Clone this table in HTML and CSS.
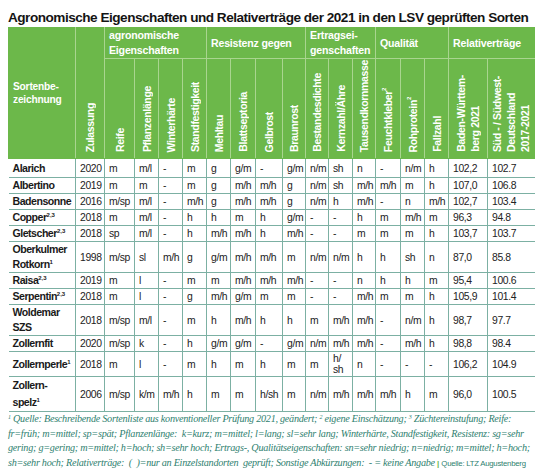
FILE: index.html
```html
<!DOCTYPE html>
<html lang="de">
<head>
<meta charset="utf-8">
<title>Agronomische Eigenschaften und Relativerträge</title>
<link rel="stylesheet" href="styles.css">
</head>
<body>
<div class="page">
  <h1 class="title">Agronomische Eigenschaften und Relativerträge der 2021 in den LSV geprüften Sorten</h1>
  <table class="lsv">
    <colgroup>
      <col class="w-name"><col class="w-zul"><col class="w-reife"><col class="w-24"><col class="w-24"><col class="w-24"><col class="w-24"><col class="w-25"><col class="w-27"><col class="w-23"><col class="w-23"><col class="w-24"><col class="w-23"><col class="w-25"><col class="w-24"><col class="w-24"><col class="w-bw"><col class="w-sued">
    </colgroup>
    <thead>
      <tr class="h1">
        <th rowspan="2" class="sort">Sortenbe-<br>zeichnung</th>
        <th rowspan="2" class="rot"><span>Zulassung</span></th>
        <th colspan="4" class="grp">agronomische<br>Eigenschaften</th>
        <th colspan="4" class="grp">Resistenz gegen</th>
        <th colspan="3" class="grp">Ertragsei-<br>genschaften</th>
        <th colspan="3" class="grp">Qualität</th>
        <th colspan="2" class="grp last">Relativerträge</th>
      </tr>
      <tr class="h2">
        <th class="rot"><span>Reife</span></th>
        <th class="rot"><span>Pflanzenlänge</span></th>
        <th class="rot"><span>Winterhärte</span></th>
        <th class="rot"><span>Standfestigkeit</span></th>
        <th class="rot"><span>Mehltau</span></th>
        <th class="rot"><span>Blattseptoria</span></th>
        <th class="rot"><span>Gelbrost</span></th>
        <th class="rot"><span>Braunrost</span></th>
        <th class="rot"><span>Bestandesdichte</span></th>
        <th class="rot"><span>Kernzahl/Ähre</span></th>
        <th class="rot"><span>Tausendkornmasse</span></th>
        <th class="rot"><span>Feuchtkleber<sup>2</sup></span></th>
        <th class="rot"><span>Rohprotein<sup>2</sup></span></th>
        <th class="rot"><span>Fallzahl</span></th>
        <th class="rot multi"><span>Baden-Württem-<br>berg 2021</span></th>
        <th class="rot multi last"><span>Süd - / Südwest-<br>Deutschland<br>2017-2021</span></th>
      </tr>
    </thead>
    <tbody>
      <tr class="r-first"><td class="name">Alarich</td><td>2020</td><td>m</td><td>m/l</td><td>-</td><td>m</td><td>g</td><td>g/m</td><td>-</td><td>g/m</td><td>n/m</td><td>sh</td><td>n</td><td>-</td><td>n/m</td><td>h</td><td>102,2</td><td>102.7</td></tr>
      <tr><td class="name">Albertino</td><td>2019</td><td>m</td><td>m</td><td>-</td><td>m</td><td>g</td><td>m/h</td><td>m/h</td><td>g</td><td>n/m</td><td>sh</td><td>m/h</td><td>m/h</td><td>m</td><td>h</td><td>107,0</td><td>106.8</td></tr>
      <tr><td class="name">Badensonne</td><td>2016</td><td>m/sp</td><td>m/l</td><td>-</td><td>m/h</td><td>g</td><td>m/h</td><td>m/h</td><td>g</td><td>n/m</td><td>h</td><td>m/h</td><td>-</td><td>n</td><td>m/h</td><td>102,7</td><td>103.4</td></tr>
      <tr><td class="name">Copper<sup>2,3</sup></td><td>2018</td><td>m</td><td>m/l</td><td>-</td><td>h</td><td>h</td><td>m</td><td>h</td><td>g/m</td><td>-</td><td>-</td><td>h</td><td>m</td><td>m/h</td><td>m</td><td>96,3</td><td>94.8</td></tr>
      <tr><td class="name">Gletscher<sup>2,3</sup></td><td>2018</td><td>sp</td><td>m/l</td><td>-</td><td>h</td><td>m/h</td><td>m/h</td><td>h</td><td>m/h</td><td>-</td><td>-</td><td>m</td><td>m</td><td>m</td><td>h</td><td>103,7</td><td>103.7</td></tr>
      <tr class="r-two"><td class="name">Oberkulmer<br>Rotkorn<sup>1</sup></td><td>1998</td><td>m/sp</td><td>sl</td><td>m/h</td><td>g</td><td>g/m</td><td>m/h</td><td>m/h</td><td>m</td><td>n/m</td><td>n/m</td><td>h</td><td>h</td><td>sh</td><td>n</td><td>87,0</td><td>85.8</td></tr>
      <tr><td class="name">Raisa<sup>2,3</sup></td><td>2019</td><td>m</td><td>l</td><td>-</td><td>m</td><td>m</td><td>m/h</td><td>m/h</td><td>m/h</td><td>-</td><td>-</td><td>n</td><td>h</td><td>h</td><td>m</td><td>95,4</td><td>100.6</td></tr>
      <tr><td class="name">Serpentin<sup>2,3</sup></td><td>2018</td><td>m</td><td>l</td><td>-</td><td>g</td><td>m/h</td><td>g/m</td><td>m</td><td>m</td><td>-</td><td>-</td><td>m/h</td><td>m</td><td>m</td><td>h</td><td>105,9</td><td>101.4</td></tr>
      <tr class="r-two"><td class="name">Woldemar<br>SZS</td><td>2018</td><td>m/sp</td><td>m/l</td><td>-</td><td>m</td><td>h</td><td>m/h</td><td>h</td><td>h</td><td>m</td><td>m/h</td><td>m/h</td><td>-</td><td>n/m</td><td>h</td><td>98,7</td><td>97.7</td></tr>
      <tr><td class="name">Zollernfit</td><td>2020</td><td>m/sp</td><td>k</td><td>-</td><td>h</td><td>g/m</td><td>g/m</td><td>-</td><td>g/m</td><td>n/m</td><td>m/h</td><td>m/h</td><td>-</td><td>m/h</td><td>h</td><td>98,8</td><td>98.4</td></tr>
      <tr class="r-perle"><td class="name">Zollernperle<sup>1</sup></td><td>2018</td><td>m</td><td>l</td><td>-</td><td>m</td><td>h</td><td>m</td><td>h</td><td>m</td><td>m</td><td class="wrap">h/<br>sh</td><td>n</td><td>-</td><td>-</td><td>-</td><td>106,2</td><td>104.9</td></tr>
      <tr class="r-spelz"><td class="name">Zollern-<br>spelz<sup>1</sup></td><td>2006</td><td>m/sp</td><td>k/m</td><td>m/h</td><td>h</td><td>m</td><td>m</td><td>h/sh</td><td>m</td><td>n/m</td><td>m/h</td><td>m/h</td><td>m/h</td><td>h</td><td>m</td><td>96,0</td><td>100.5</td></tr>
    </tbody>
  </table>
  <p class="notes"><sup>1</sup> Quelle: Beschreibende Sortenliste aus konventioneller Prüfung 2021, geändert; <sup>2</sup> eigene Einschätzung; <sup>3</sup> Züchtereinstufung; Reife:<br>fr=früh; m=mittel; sp=spät; Pflanzenlänge:&nbsp; k=kurz; m=mittel; l=lang; sl=sehr lang; Winterhärte, Standfestigkeit, Resistenz: sg=sehr<br>gering; g=gering; m=mittel; h=hoch; sh=sehr hoch; Ertrags-, Qualitätseigenschaften: sn=sehr niedrig; n=niedrig; m=mittel; h=hoch;<br>sh=sehr hoch; Relativerträge:&nbsp; (&nbsp; )=nur an Einzelstandorten&nbsp; geprüft; Sonstige Abkürzungen:&nbsp; - = keine Angabe <span class="sep">|</span> <span class="src">Quelle: LTZ Augustenberg</span></p>
</div>
</body>
</html>
```
FILE: styles.css
```css
html, body {
  margin: 0;
  padding: 0;
  background: #ffffff;
}

body {
  font-family: "Liberation Sans", Arial, sans-serif;
  color: #1d1d1d;
}

.page {
  padding: 9px 0 0 8px;
}

.title {
  margin: 0;
  font-size: 13.6px;
  line-height: 18px;
  font-weight: bold;
  letter-spacing: -0.5px;
  color: #141414;
  white-space: nowrap;
}

.lsv {
  border-collapse: collapse;
  table-layout: fixed;
  width: 526px;
}

.w-name { width: 67px; }
.w-zul { width: 29px; }
.w-reife { width: 30px; }
.w-23 { width: 23px; }
.w-24 { width: 24px; }
.w-25 { width: 25px; }
.w-27 { width: 27px; }
.w-bw { width: 39px; }
.w-sued { width: 47px; }

.lsv th {
  background: #6cb84a;
  color: #ffffff;
  font-weight: bold;
  border: 1px solid #a9d58f;
  padding: 0;
  text-align: left;
  letter-spacing: -0.2px;
}

.lsv thead tr:first-child th {
  border-top-color: #6cb84a;
}

.lsv th:first-child {
  border-left-color: #6cb84a;
}

.lsv th.last {
  border-right-color: #6cb84a;
}

.lsv .h2 th,
.lsv th.sort,
.lsv .h1 th.rot {
  border-bottom-color: #6cb84a;
}

.h1 {
  height: 30px;
}

.h2 {
  height: 100px;
}

.grp {
  font-size: 10.6px;
  line-height: 15px;
  padding-left: 4px !important;
  vertical-align: middle;
}

.sort {
  font-size: 10.2px;
  line-height: 13px;
  padding-left: 4px !important;
  vertical-align: middle;
}

.rot {
  vertical-align: bottom;
  text-align: center !important;
  font-size: 10.5px;
  line-height: 14px;
  letter-spacing: -0.35px !important;
  padding-bottom: 3px !important;
}

.rot span {
  display: inline-block;
  writing-mode: vertical-rl;
  transform: rotate(180deg);
  white-space: nowrap;
  text-align: left;
}

.rot sup {
  font-size: 6px;
  line-height: 0;
  vertical-align: super;
}

.lsv td {
  border: 1px solid #7cb0a3;
  padding: 0 0 0 4px;
  font-size: 10.4px;
  letter-spacing: -0.4px;
  line-height: 15px;
  height: 15px;
  vertical-align: middle;
  white-space: nowrap;
  overflow: hidden;
  color: #222222;
}

.lsv td:first-child {
  border-left: none;
}

.lsv td:last-child {
  border-right: none;
}

.lsv tbody tr:first-child td {
  border-top: none;
}

.lsv td.name {
  font-weight: bold;
  font-size: 10.6px;
  letter-spacing: -0.5px;
  color: #1a1a1a;
}

.lsv td.name sup {
  font-size: 6px;
  letter-spacing: 0;
  line-height: 0;
  vertical-align: 4px;
}

.lsv td.wrap {
  line-height: 11px;
}

.r-first td {
  height: 18px;
}

.r-two td {
  height: 30px;
}

.r-perle td {
  height: 24px;
}

.r-spelz td {
  height: 34px;
}

.r-spelz td.name {
  line-height: 17px;
}

.notes {
  margin: 0;
  padding-top: 0;
  font-family: "Liberation Serif", "DejaVu Serif", serif;
  font-style: italic;
  font-size: 10.2px;
  letter-spacing: -0.27px;
  line-height: 14.5px;
  color: #2f7f70;
  white-space: nowrap;
}

.notes sup {
  font-size: 6px;
  line-height: 0;
  vertical-align: 3px;
}

.sep {
  font-style: normal;
  font-weight: bold;
  color: #6cb84a;
  font-family: "Liberation Sans", Arial, sans-serif;
  font-size: 8px;
}

.src {
  font-family: "Liberation Sans", Arial, sans-serif;
  font-style: normal;
  font-size: 7.8px;
  letter-spacing: -0.25px;
}
```
